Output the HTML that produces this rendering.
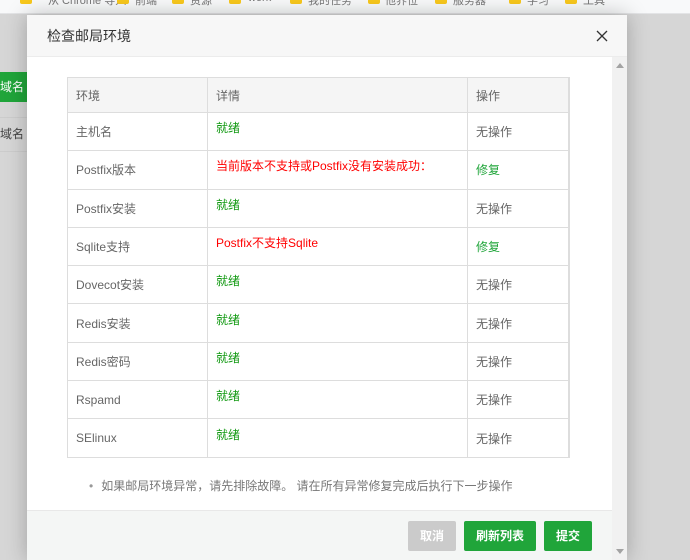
<!DOCTYPE html>
<html><head><meta charset="utf-8"><style>
*{margin:0;padding:0;box-sizing:border-box}
body{width:690px;height:560px;overflow:hidden;position:relative;background:#d6d6d6;font-family:"Liberation Sans","Noto Sans CJK SC",sans-serif;font-size:12px;color:#555}
.bar{position:absolute;left:0;top:0;width:690px;height:14px;background:#f8f9fa;border-bottom:1px solid #e3e4e6;overflow:hidden}
.f{position:absolute;top:-6px;width:12px;height:10px;background:#f8c81c;border-radius:2px}
.t{position:absolute;top:-8px;font-size:11px;color:#777}
.dlg{position:absolute;left:27px;top:15px;width:600px;height:545px;background:#fff;box-shadow:0 0 20px rgba(0,0,0,.25)}
.hd{height:42px;background:#f7f7f7;border-bottom:1px solid #ececec;padding-left:20px;line-height:42px;font-size:14px;color:#333}
.x{position:absolute;right:19px;top:15px;width:12px;height:12px}
.sb{position:absolute;left:585px;top:42px;width:15px;height:503px;background:#f1f1f1}
table{position:absolute;left:40px;top:62px;width:503px;border-collapse:collapse;border:1px solid #ddd;border-right-width:2px}
td,th{border:1px solid #ddd;height:38.3px;padding-left:8px;text-align:left;font-weight:normal;font-size:12px;color:#666;vertical-align:middle}
th{background:#f5f5f5;height:35px}
.g{color:#119911;position:relative;top:-4px}
.r{color:#f00;position:relative;top:-4px}
td.ok{color:#20a53a}
.note{position:absolute;left:76px;top:462px;font-size:12px;color:#777}
.ft{position:absolute;left:0;top:495px;width:585px;height:50px;background:#f4f6f5;border-top:1px solid #e8e8e8}
.btn{position:absolute;top:10px;height:30px;line-height:30px;text-align:center;color:#fff;font-weight:bold;font-size:12px;border-radius:2px}
</style></head><body>
<div class="bar">
<div class="f" style="left:20px"></div><div class="t" style="left:48px">从 Chrome 导入</div>
<div class="f" style="left:117px"></div><div class="t" style="left:135px">前端</div>
<div class="f" style="left:172px"></div><div class="t" style="left:190px">资源</div>
<div class="f" style="left:229px"></div><div class="t" style="left:248px">work</div>
<div class="f" style="left:290px"></div><div class="t" style="left:308px">我的任务</div>
<div class="f" style="left:368px"></div><div class="t" style="left:385px">他界位</div>
<div class="f" style="left:435px"></div><div class="t" style="left:453px">服务器</div>
<div class="f" style="left:509px"></div><div class="t" style="left:527px">学习</div>
<div class="f" style="left:565px"></div><div class="t" style="left:583px">工具</div>
</div>
<div style="position:absolute;left:0;top:72px;width:27px;height:30px;background:#20a53a;color:#fff;line-height:30px;font-size:12px">域名</div>
<div style="position:absolute;left:0;top:117px;width:27px;height:35px;border-top:1px solid #ccc;border-bottom:1px solid #ccc;line-height:33px;font-size:12px;color:#444">域名</div>
<div class="dlg">
<div class="hd">检查邮局环境</div>
<svg class="x" viewBox="0 0 12 12"><path d="M1 1L11 11M11 1L1 11" stroke="#333" stroke-width="1.3"/></svg>
<div class="sb"><div style="margin:6px 0 0 4px;width:0;height:0;border-left:4px solid transparent;border-right:4px solid transparent;border-bottom:5px solid #a3a3a3"></div><div style="position:absolute;left:4px;bottom:6px;width:0;height:0;border-left:4px solid transparent;border-right:4px solid transparent;border-top:5px solid #a3a3a3"></div></div>
<table>
<tr><th style="width:140px">环境</th><th style="width:260px">详情</th><th>操作</th></tr>
<tr><td>主机名</td><td><span class="g">就绪</span></td><td>无操作</td></tr>
<tr><td>Postfix版本</td><td><span class="r">当前版本不支持或Postfix没有安装成功：</span></td><td class="ok">修复</td></tr>
<tr><td>Postfix安装</td><td><span class="g">就绪</span></td><td>无操作</td></tr>
<tr><td>Sqlite支持</td><td><span class="r">Postfix不支持Sqlite</span></td><td class="ok">修复</td></tr>
<tr><td>Dovecot安装</td><td><span class="g">就绪</span></td><td>无操作</td></tr>
<tr><td>Redis安装</td><td><span class="g">就绪</span></td><td>无操作</td></tr>
<tr><td>Redis密码</td><td><span class="g">就绪</span></td><td>无操作</td></tr>
<tr><td>Rspamd</td><td><span class="g">就绪</span></td><td>无操作</td></tr>
<tr><td>SElinux</td><td><span class="g">就绪</span></td><td>无操作</td></tr>
</table>
<div class="note"><span style="color:#999;margin-left:-14px;margin-right:8px">•</span>如果邮局环境异常，请先排除故障。 请在所有异常修复完成后执行下一步操作</div>
<div class="ft">
<div class="btn" style="left:381px;width:48px;background:#cbcbcb">取消</div>
<div class="btn" style="left:437px;width:72px;background:#20a53a">刷新列表</div>
<div class="btn" style="left:517px;width:48px;background:#20a53a">提交</div>
</div>
</div>
</body></html>
